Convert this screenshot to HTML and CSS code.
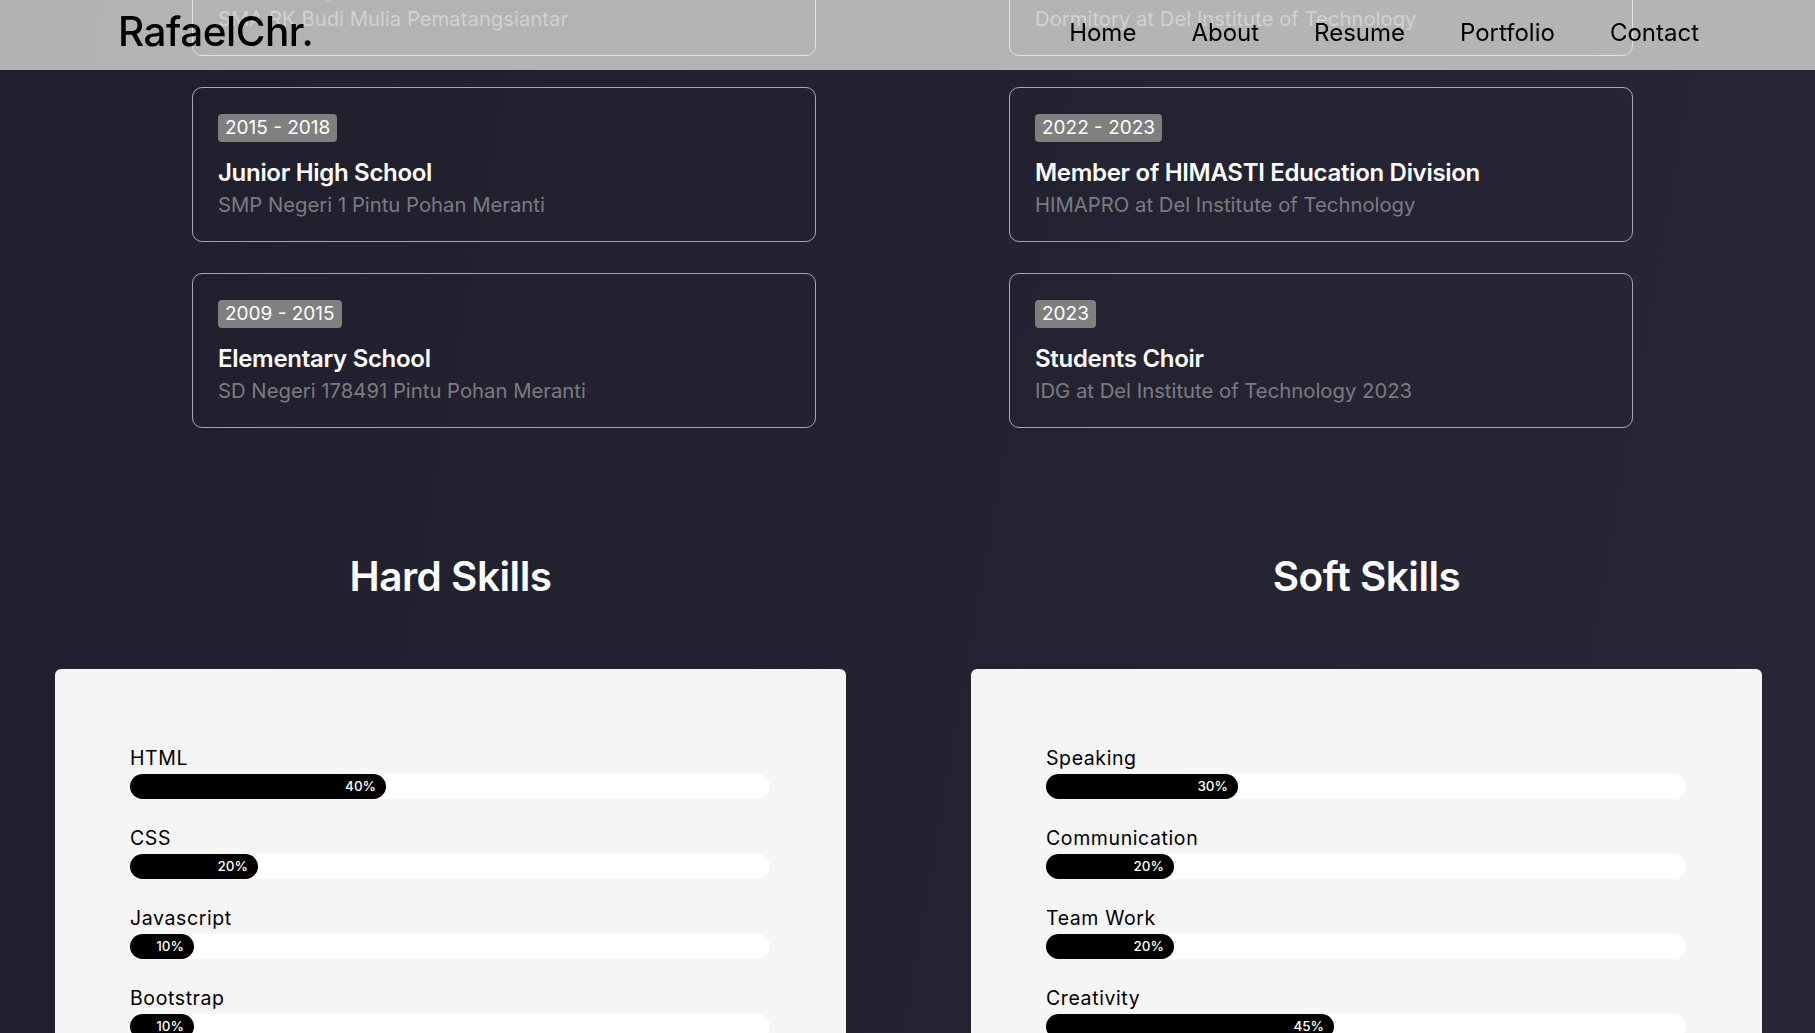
FILE: index.html
```html
<!DOCTYPE html>
<html lang="en">
<head>
<meta charset="utf-8">
<title>RafaelChr. - Resume</title>
<link rel="stylesheet" href="styles.css">
</head>
<body>
<header class="navbar">
  <div class="logo">RafaelChr.</div>
  <nav class="menu">
    <a href="#">Home</a>
    <a href="#">About</a>
    <a href="#">Resume</a>
    <a href="#">Portfolio</a>
    <a href="#">Contact</a>
  </nav>
</header>

<main class="page">
  <section class="resume">
    <div class="col">
      <div class="item">
        <span class="badge">2018 - 2021</span>
        <h3 class="item-title">Senior High School</h3>
        <p class="item-sub">SMA RK Budi Mulia Pematangsiantar</p>
      </div>
      <div class="item">
        <span class="badge">2015 - 2018</span>
        <h3 class="item-title">Junior High School</h3>
        <p class="item-sub">SMP Negeri 1 Pintu Pohan Meranti</p>
      </div>
      <div class="item">
        <span class="badge">2009 - 2015</span>
        <h3 class="item-title">Elementary School</h3>
        <p class="item-sub">SD Negeri 178491 Pintu Pohan Meranti</p>
      </div>
    </div>
    <div class="col">
      <div class="item">
        <span class="badge">2021 - 2022</span>
        <h3 class="item-title">Head of Dormitory</h3>
        <p class="item-sub">Dormitory at Del Institute of Technology</p>
      </div>
      <div class="item">
        <span class="badge">2022 - 2023</span>
        <h3 class="item-title">Member of HIMASTI Education Division</h3>
        <p class="item-sub">HIMAPRO at Del Institute of Technology</p>
      </div>
      <div class="item">
        <span class="badge">2023</span>
        <h3 class="item-title">Students Choir</h3>
        <p class="item-sub">IDG at Del Institute of Technology 2023</p>
      </div>
    </div>
  </section>

  <section class="skills">
    <div class="skill-col">
      <h2 class="skill-heading">Hard Skills</h2>
      <div class="skill-card">
        <div class="skill">
          <div class="skill-name">HTML</div>
          <div class="track"><div class="fill" style="width:40%">40%</div></div>
        </div>
        <div class="skill">
          <div class="skill-name">CSS</div>
          <div class="track"><div class="fill" style="width:20%">20%</div></div>
        </div>
        <div class="skill">
          <div class="skill-name">Javascript</div>
          <div class="track"><div class="fill" style="width:10%">10%</div></div>
        </div>
        <div class="skill">
          <div class="skill-name">Bootstrap</div>
          <div class="track"><div class="fill" style="width:10%">10%</div></div>
        </div>
      </div>
    </div>
    <div class="skill-col">
      <h2 class="skill-heading">Soft Skills</h2>
      <div class="skill-card">
        <div class="skill">
          <div class="skill-name">Speaking</div>
          <div class="track"><div class="fill" style="width:30%">30%</div></div>
        </div>
        <div class="skill">
          <div class="skill-name">Communication</div>
          <div class="track"><div class="fill" style="width:20%">20%</div></div>
        </div>
        <div class="skill">
          <div class="skill-name">Team Work</div>
          <div class="track"><div class="fill" style="width:20%">20%</div></div>
        </div>
        <div class="skill">
          <div class="skill-name">Creativity</div>
          <div class="track"><div class="fill" style="width:45%">45%</div></div>
        </div>
      </div>
    </div>
  </section>
</main>
</body>
</html>
```

FILE: styles.css
```css
* { box-sizing: border-box; }

html, body {
  margin: 0;
  padding: 0;
}

body {
  font-family: Inter, "Open Sans", sans-serif;
  background: linear-gradient(100deg, #201f2d 0%, #232231 50%, #282737 100%);
  background-attachment: fixed;
  color: #fff;
  min-height: 1400px;
}

.navbar {
  position: fixed;
  top: 0;
  left: 0;
  right: 0;
  height: 70px;
  display: flex;
  align-items: center;
  justify-content: space-between;
  padding: 0 116px 0 118px;
  background: rgba(255, 255, 248, 0.66);
  z-index: 10;
}

.logo {
  font-size: 40.5px;
  font-weight: 500;
  color: #000;
  letter-spacing: -0.5px;
  line-height: 1;
  margin-top: -5px;
}

.menu {
  display: flex;
  gap: 55px;
  margin-top: -6px;
}

.menu a {
  color: #000;
  text-decoration: none;
  font-size: 24px;
  font-weight: 400;
}

.page {
  margin-top: -99px;
}

.resume {
  display: grid;
  grid-template-columns: 624px 624px;
  column-gap: 193px;
  padding-left: 192px;
}

.col {
  display: flex;
  flex-direction: column;
  gap: 31px;
}

.item {
  height: 155px;
  border: 1px solid #a9a9ad;
  border-radius: 10px;
  padding: 26px 25px 0 25px;
}

.badge {
  display: inline-block;
  background: #7f7f7f;
  color: #fff;
  font-size: 19px;
  line-height: 28px;
  height: 28px;
  padding: 0 7px;
  border-radius: 4px;
}

.item-title {
  margin: 17px 0 0 0;
  font-size: 24px;
  font-weight: 600;
  line-height: 28px;
  letter-spacing: -0.3px;
  color: #fff;
}

.item-sub {
  margin: 6px 0 0 0;
  font-size: 20.3px;
  line-height: 24px;
  color: #7c7c80;
}

.skills {
  display: grid;
  grid-template-columns: 791px 791px;
  column-gap: 125px;
  padding-left: 55px;
  margin-top: 124px;
}

.skill-heading {
  margin: 0;
  text-align: center;
  font-size: 40.5px;
  font-weight: 600;
  line-height: 50px;
  letter-spacing: -0.5px;
  color: #fff;
}

.skill-card {
  margin-top: 67px;
  background: #f5f5f5;
  border-radius: 6px;
  padding: 77px 76px 60px 75px;
  display: flex;
  flex-direction: column;
  gap: 27px;
}

.skill-name {
  font-size: 19.5px;
  line-height: 24px;
  letter-spacing: 0.6px;
  color: #000;
  margin-bottom: 4px;
}

.track {
  height: 25px;
  background: #fff;
  border-radius: 13px;
}

.fill {
  height: 25px;
  background: #000;
  border-radius: 13px;
  color: #fff;
  font-size: 13.5px;
  font-weight: 500;
  line-height: 25px;
  text-align: right;
  padding-right: 10px;
}
```
